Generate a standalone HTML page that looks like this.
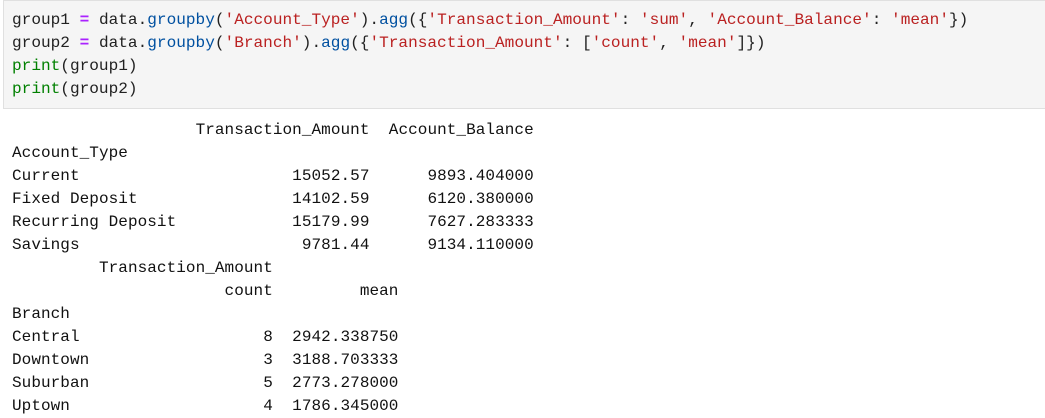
<!DOCTYPE html>
<html><head><style>
body{margin:0;background:#fff;width:1045px;height:418px;overflow:hidden}
.cell{position:absolute;left:3px;top:0;width:1045px;height:109px;background:#f5f5f5;border:1px solid #e0e0e0;box-sizing:border-box}
pre{margin:0;font-family:"Liberation Mono",monospace;line-height:23px;position:absolute;left:12px;white-space:pre}
.code{top:9px;color:#212121;font-size:16.1px}
.out{top:119px;color:#111;font-size:16px;letter-spacing:0.06px}
.o{color:#aa22ff;font-weight:bold}.b{color:#008000}.s{color:#ba2121}.f{color:#0050a0}
</style></head><body>
<div class="cell"></div>
<pre class="code">group1 <span class="o">=</span> data<span>.</span><span class="f">groupby</span>(<span class="s">'Account_Type'</span>)<span>.</span><span class="f">agg</span>({<span class="s">'Transaction_Amount'</span>: <span class="s">'sum'</span>, <span class="s">'Account_Balance'</span>: <span class="s">'mean'</span>})
group2 <span class="o">=</span> data<span>.</span><span class="f">groupby</span>(<span class="s">'Branch'</span>)<span>.</span><span class="f">agg</span>({<span class="s">'Transaction_Amount'</span>: [<span class="s">'count'</span>, <span class="s">'mean'</span>]})
<span class="b">print</span>(group1)
<span class="b">print</span>(group2)</pre>
<pre class="out">                   Transaction_Amount  Account_Balance
Account_Type
Current                      15052.57      9893.404000
Fixed Deposit                14102.59      6120.380000
Recurring Deposit            15179.99      7627.283333
Savings                       9781.44      9134.110000
         Transaction_Amount
                      count         mean
Branch
Central                   8  2942.338750
Downtown                  3  3188.703333
Suburban                  5  2773.278000
Uptown                    4  1786.345000</pre>
</body></html>
